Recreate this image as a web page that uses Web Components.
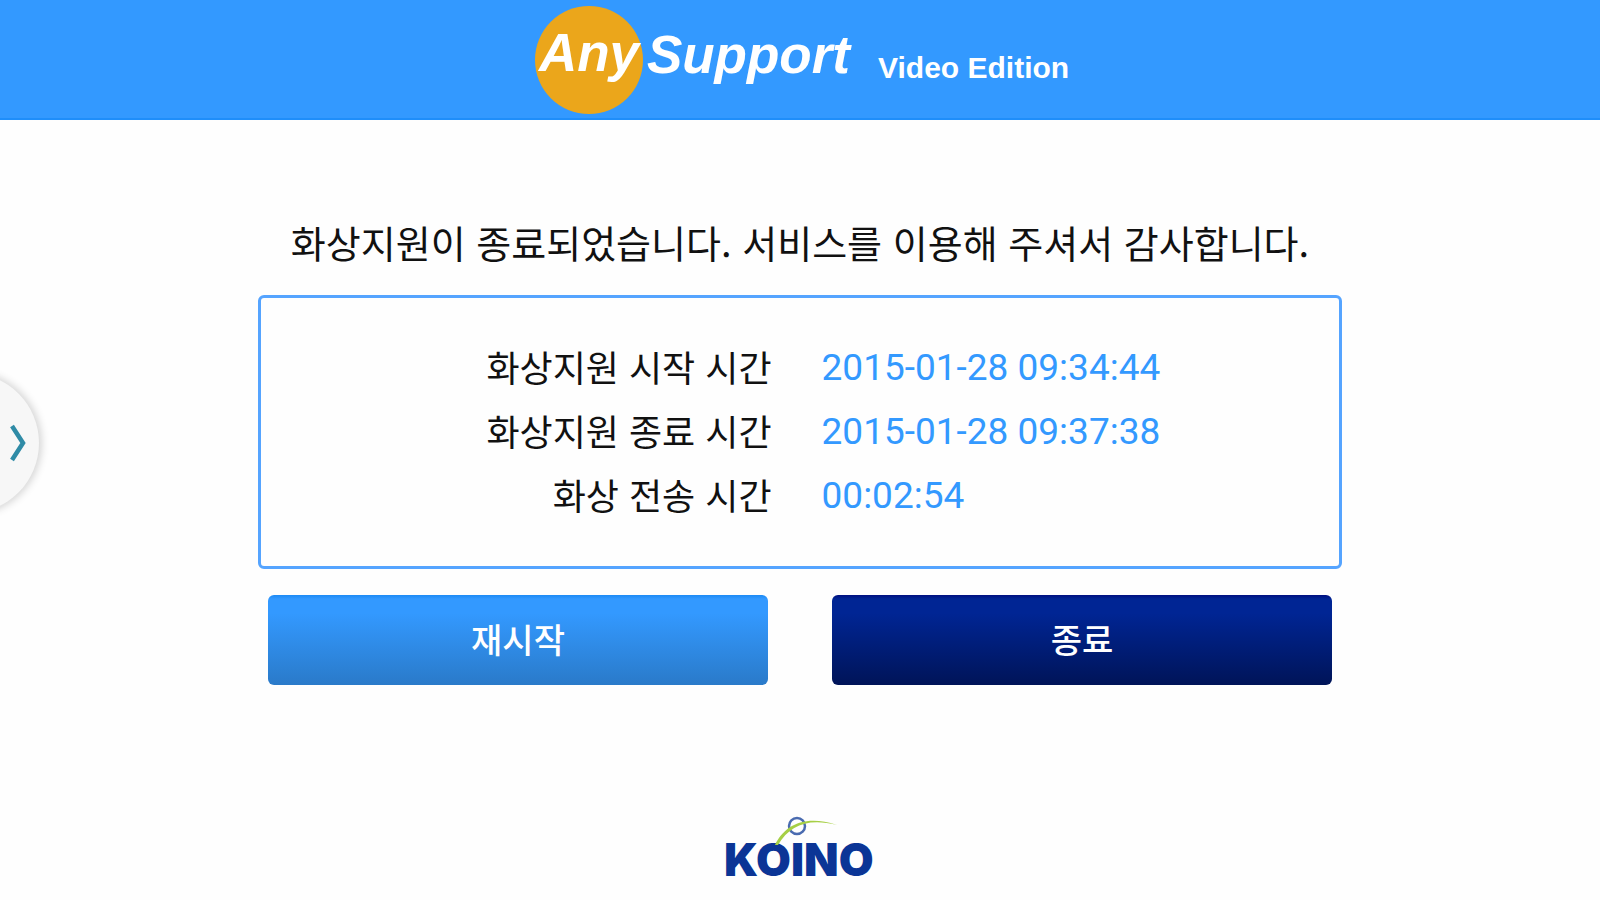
<!DOCTYPE html>
<html lang="ko">
<head>
<meta charset="utf-8">
<meta name="viewport" content="width=device-width, initial-scale=1">
<title>AnySupport Video Edition</title>
<style>
  body { margin: 0; background: #fefefe; color: #111; font-family: Roboto, "Noto Sans CJK KR", sans-serif; }
</style>
</head>
<body>
<support-app></support-app>
<script>
const define = (name, html) => {
  const template = document.createElement('template');
  template.innerHTML = html;
  customElements.define(name, class extends HTMLElement {
    constructor() {
      super();
      this.attachShadow({ mode: 'open' }).append(template.content.cloneNode(true));
    }
  });
};

define('brand-header', `
  <style>
    :host { display: block; background: #3399ff; border-bottom: 2px solid #1f8efa; color: #fff;
      font-family: "Liberation Sans", Arial, sans-serif; font-weight: 700; }
    header { display: flex; justify-content: center; align-items: flex-start; box-sizing: border-box;
      height: 118px; padding: 6px 0 0 4px; }
    h1 { display: flex; align-items: flex-start; gap: 4px; margin: 0; font-size: 53px; line-height: 98px; font-style: italic; }
    .any { width: 108px; height: 108px; border-radius: 50%; background: #eba61b;
      line-height: 94px; text-indent: 4px; white-space: nowrap; }
    .edition { margin-left: 28px; font-size: 30px; line-height: 124px; }
  </style>
  <header>
    <h1><span class="any">Any</span><span>Support</span></h1>
    <span class="edition">Video Edition</span>
  </header>`);

define('session-summary', `
  <style>
    :host { display: block; box-sizing: border-box; padding: 38px 0; border: 3px solid #55a4ff; border-radius: 6px; }
    table { width: 100%; table-layout: fixed; border-collapse: collapse; }
    th, td { box-sizing: border-box; height: 64px; padding: 0; white-space: nowrap; vertical-align: top; }
    th { width: 52%; padding-right: 50px; text-align: right; font-size: 36px; line-height: 60px; font-weight: 400;
      font-family: "Noto Sans CJK KR", sans-serif; }
    td { text-align: left; font-size: 37px; line-height: 64px; color: #3399ff; font-family: Roboto, sans-serif; }
  </style>
  <table>
    <tbody>
      <tr><th scope="row">화상지원 시작 시간</th><td>2015-01-28 09:34:44</td></tr>
      <tr><th scope="row">화상지원 종료 시간</th><td>2015-01-28 09:37:38</td></tr>
      <tr><th scope="row">화상 전송 시간</th><td>00:02:54</td></tr>
    </tbody>
  </table>`);

define('action-button', `
  <style>
    :host { display: block; --edge: #1c8af5; --from: #3399ff; --to: #2a7ac9; }
    :host([tone="dark"]) { --edge: #000f80; --from: #002594; --to: #001458; }
    button { display: block; width: 100%; height: 90px; padding: 0 0 2px; border: 0; border-radius: 6px; color: #fff;
      background: linear-gradient(var(--edge) 0, var(--from) 4px 18px, var(--to));
      font: 500 34px/88px "Noto Sans CJK KR", sans-serif; cursor: pointer; }
  </style>
  <button type="button"><slot></slot></button>`);

define('drawer-handle', `
  <style>
    :host { display: block; position: fixed; left: 0; top: 369px; width: 60px; height: 148px; overflow: hidden; }
    button { display: flex; align-items: center; justify-content: flex-end; box-sizing: border-box;
      width: 140px; height: 140px; margin: 4px 0 0 -101px; padding: 0 12px 0 0; border: 0; border-radius: 50%;
      background: #f7f7f7; box-shadow: 1px 0 8px 1px #cfcfcf; cursor: pointer; }
  </style>
  <button type="button" aria-label="메뉴 열기">
    <svg width="17" height="38" viewBox="0 0 17 38" fill="none" stroke="#2f8ba6" stroke-width="4.5"><path d="M2 2 13 19 2 36"/></svg>
  </button>`);

define('koino-logo', `
  <style>
    :host { display: block; }
    svg { display: block; overflow: visible; }
    text { font: 900 45px Inter, sans-serif; fill: #0b3596; }
  </style>
  <svg width="152" height="76" viewBox="0 0 152 76" role="img" aria-label="KOINO">
    <text x="0" y="60">KOINO</text>
    <circle cx="73" cy="10" r="8" fill="none" stroke="#4a6bb0" stroke-width="2.5"/>
    <path d="M51 29C60 10 80-2 113 9 84 2 66 9 54 29Z" fill="#a6cf45"/>
  </svg>`);

define('support-app', `
  <style>
    :host { display: flex; flex-direction: column; min-height: 100vh; }
    main { display: flex; flex-direction: column; width: min(92%, 1084px); margin: 0 auto; padding-top: 94px; }
    p { margin: 0; font-size: 38px; line-height: 56px; text-align: center; white-space: nowrap;
      font-family: "Noto Sans CJK KR", sans-serif; }
    session-summary { margin-top: 25px; }
    .actions { display: grid; grid-template-columns: 1fr 1fr; gap: 64px; margin-top: 26px; padding: 0 10px; }
    footer { display: flex; justify-content: center; margin-top: auto; padding-bottom: 8px; }
  </style>
  <brand-header></brand-header>
  <main>
    <p>화상지원이 종료되었습니다. 서비스를 이용해 주셔서 감사합니다.</p>
    <session-summary></session-summary>
    <div class="actions">
      <action-button>재시작</action-button>
      <action-button tone="dark">종료</action-button>
    </div>
  </main>
  <footer><koino-logo></koino-logo></footer>
  <drawer-handle></drawer-handle>`);
</script>
</body>
</html>
